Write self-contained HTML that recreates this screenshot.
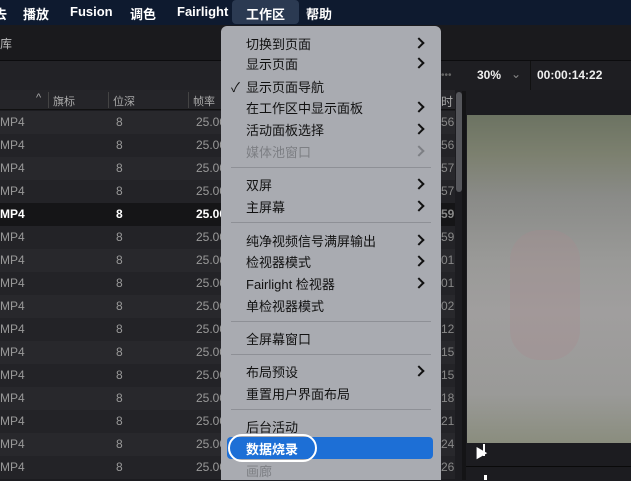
<!DOCTYPE html>
<html><head><meta charset="utf-8"><style>
*{margin:0;padding:0;box-sizing:border-box}
body{width:631px;height:480px;overflow:hidden;background:#1c1c20;font-family:"Liberation Sans","Noto Sans CJK SC",sans-serif;position:relative;color:#999}
.mb{position:absolute;left:0;top:0;width:631px;height:25px;background:#0e1a2f;color:#fff;font-size:13px;font-weight:bold}
.mb span{position:absolute;top:4px}
.hl{position:absolute;left:232px;top:0;width:67px;height:24px;background:#2b3a52;border-radius:4px}
.a{position:absolute}
.row{position:absolute;left:0;width:455px;height:23px;font-size:12px}
.row span{position:absolute;top:4px}
.menu{position:absolute;left:221px;top:26px;width:220px;height:454px;background:#a9abb1;border-radius:6px 6px 0 0;font-size:13px;color:#111}
.mi{position:absolute;left:25px;height:20px}
.ar{position:absolute;left:194px;width:8px;height:8px;border-right:2px solid #111;border-top:2px solid #111;transform:rotate(45deg)}
.sep{position:absolute;left:10px;width:200px;height:1px;background:#8e9096}
</style></head><body>
<div class="mb"><div class="hl"></div>
<span style="left:-6px">去</span><span style="left:23px">播放</span><span style="left:70px">Fusion</span><span style="left:130px">调色</span><span style="left:177px">Fairlight</span><span style="left:246px">工作区</span><span style="left:306px">帮助</span></div>
<div class="a" style="left:0;top:25px;width:631px;height:36px;background:#1a1a1d"></div>
<div class="a" style="left:0;top:35px;font-size:12px;color:#bbb">库</div>
<div class="a" style="left:0;top:60px;width:631px;height:1px;background:#0c0c0e"></div>
<div class="a" style="left:0;top:61px;width:631px;height:29px;background:#222226"></div>
<div class="a" style="left:0;top:90px;width:455px;height:20px;background:#252529;border-bottom:1px solid #111;font-size:11px;color:#aaa">
<span class="a" style="left:36px;top:2px">^</span><span class="a" style="left:53px;top:3px">旗标</span><span class="a" style="left:113px;top:3px">位深</span><span class="a" style="left:193px;top:3px">帧率</span><span class="a" style="left:441px;top:3px;font-size:12px">时</span>
<div class="a" style="left:48px;top:2px;width:1px;height:16px;background:#444"></div><div class="a" style="left:108px;top:2px;width:1px;height:16px;background:#444"></div><div class="a" style="left:188px;top:2px;width:1px;height:16px;background:#444"></div></div>
<div class="a" style="left:441px;top:61px;width:190px;height:29px;background:#1e1e22;color:#eee;font-size:12px;font-weight:bold">
<span class="a" style="left:36px;top:7px">30%</span><span class="a" style="left:70px;top:6px;color:#888;font-weight:normal">⌄</span><div class="a" style="left:89px;top:0;width:1px;height:29px;background:#111"></div><span class="a" style="left:96px;top:7px">00:00:14:22</span><div class="a" style="left:-5px;top:0;width:1px;height:29px;background:#111"></div></div>
<div class="a" style="left:441px;top:70px;color:#666;font-size:10px">••• </div>
<div id="rows"></div>
<div class="a" style="left:456px;top:92px;width:6px;height:100px;background:#55565b;border-radius:3px"></div>
<div class="a" style="left:462px;top:91px;width:4px;height:389px;background:#141416"></div>
<div class="a" style="left:467px;top:115px;width:164px;height:328px;background:linear-gradient(180deg,#6c7362 0%,#7c806f 12%,#8a8b88 25%,#9a9a98 45%,#a09e9e 60%,#9a9a98 85%,#8a8d7e 100%)"></div>
<div class="a" style="left:510px;top:230px;width:70px;height:130px;background:#a58d90;opacity:.35;border-radius:30px"></div>
<div class="a" style="left:466px;top:466px;width:165px;height:1px;background:#0a0a0a"></div>
<div class="a" style="left:475px;top:443px;color:#fff;font-size:13px">▶</div>
<div class="a" style="left:483px;top:444px;width:2px;height:12px;background:#fff"></div>
<div class="a" style="left:484px;top:475px;width:3px;height:5px;background:#fff"></div>
<div class="menu">
<div class="mi" style="top:8px">切换到页面</div><div class="ar" style="top:13px"></div>
<div class="mi" style="top:28px">显示页面</div><div class="ar" style="top:33px"></div>
<div class="a" style="left:10px;top:51px;font-size:13px">✓</div><div class="mi" style="top:51px">显示页面导航</div>
<div class="mi" style="top:72px">在工作区中显示面板</div><div class="ar" style="top:77px"></div>
<div class="mi" style="top:94px">活动面板选择</div><div class="ar" style="top:99px"></div>
<div class="mi" style="top:116px;color:#7d7f84">媒体池窗口</div><div class="ar" style="top:121px;border-color:#7d7f84"></div>
<div class="sep" style="top:141px"></div>
<div class="mi" style="top:149px">双屏</div><div class="ar" style="top:154px"></div>
<div class="mi" style="top:171px">主屏幕</div><div class="ar" style="top:176px"></div>
<div class="sep" style="top:196px"></div>
<div class="mi" style="top:205px">纯净视频信号满屏输出</div><div class="ar" style="top:210px"></div>
<div class="mi" style="top:226px">检视器模式</div><div class="ar" style="top:231px"></div>
<div class="mi" style="top:248px">Fairlight 检视器</div><div class="ar" style="top:253px"></div>
<div class="mi" style="top:270px">单检视器模式</div>
<div class="sep" style="top:295px"></div>
<div class="mi" style="top:303px">全屏幕窗口</div>
<div class="sep" style="top:328px"></div>
<div class="mi" style="top:336px">布局预设</div><div class="ar" style="top:341px"></div>
<div class="mi" style="top:358px">重置用户界面布局</div>
<div class="sep" style="top:383px"></div>
<div class="mi" style="top:391px">后台活动</div>
<div class="a" style="left:6px;top:411px;width:206px;height:22px;background:#1d6fd6;border-radius:4px"></div>
<div class="a" style="left:7px;top:408px;width:89px;height:28px;border:2.5px solid #fff;border-radius:14px"></div>
<div class="mi" style="top:413px;color:#fff;font-weight:bold">数据烧录</div>
<div class="mi" style="top:435px;color:#7d7f84">画廊</div>
</div>
<script>
var h='';for(var i=0;i<16;i++){var y=111+i*23;var sel=i==4;var bg=sel?'#151517':(i%2?'#232327':'#28282c');var c=sel?'#fff':'#999';var fw=sel?'bold':'normal';
h+='<div class="row" style="top:'+y+'px;background:'+bg+';color:'+c+';font-weight:'+fw+'"><span style="left:0">MP4</span><span style="left:116px">8</span><span style="left:196px">25.00</span><span style="left:441px;color:#888;width:14px;overflow:hidden;white-space:nowrap">'+['56:','56:','57:','57:','59:','59:','01:','01:','02:','12:','15:','15:','18:','21:','24:','26:'][i]+'</span></div>';}
document.getElementById('rows').innerHTML=h;
</script>
</body></html>
